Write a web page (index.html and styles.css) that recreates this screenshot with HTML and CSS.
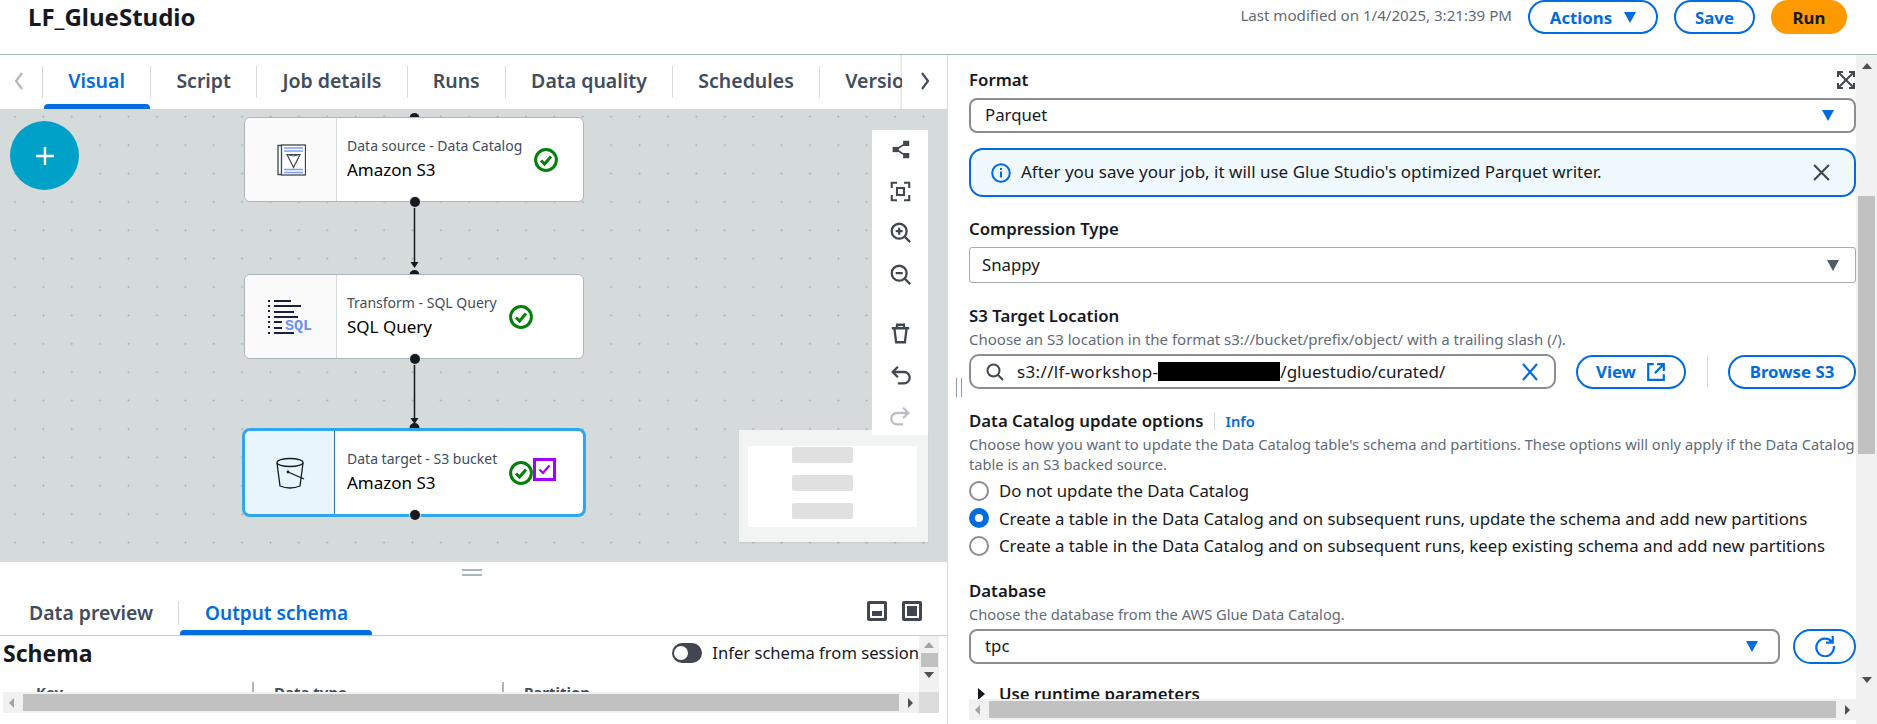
FILE: index.html
```html
<!DOCTYPE html>
<html lang="en">
<head>
    <meta charset="UTF-8">
    <meta name="viewport" content="width=device-width, initial-scale=1.0">
    <title>LF_GlueStudio</title>
    <link rel="stylesheet" href="styles.css">
</head>
<body>
    <header class="top-bar">
        <h1 class="job-title">LF_GlueStudio</h1>
        <div class="top-actions">
            <span class="modified">Last modified on 1/4/2025, 3:21:39 PM</span>
            <button class="btn btn-actions">Actions <i class="tri tri-blue tri-gap"></i></button>
            <button class="btn btn-save">Save</button>
            <button class="btn btn-run">Run</button>
        </div>
    </header>

    <main class="panes">
        <section class="left-pane">
            <nav class="tabs">
                <svg class="chev chev-left" width="12" height="20" viewBox="0 0 12 20"><path d="M9 2 3 10l6 8" fill="none" stroke="#b4b8bd" stroke-width="2.2"/></svg>
                <div class="tab-list">
                    <a class="tab active"><span>Visual</span></a>
                    <a class="tab"><span>Script</span></a>
                    <a class="tab"><span>Job details</span></a>
                    <a class="tab"><span>Runs</span></a>
                    <a class="tab"><span>Data quality</span></a>
                    <a class="tab"><span>Schedules</span></a>
                    <a class="tab"><span>Versions</span></a>
                </div>
                <svg class="chev chev-right" width="12" height="20" viewBox="0 0 12 20"><path d="m3 2 6 8-6 8" fill="none" stroke="#414d5c" stroke-width="2.2"/></svg>
            </nav>

            <div class="canvas">
                <svg class="wires" width="947" height="452" viewBox="0 0 947 452">
                    <g fill="#16191f" stroke="none">
                        <circle cx="414.5" cy="8" r="5"/>
                        <circle cx="414.5" cy="165" r="5"/>
                        <circle cx="414.5" cy="318" r="5"/>
                        <path d="M410.5 152h8l-4 6zM410.5 308h8l-4 6z"/>
                    </g>
                    <path d="M414.5 95v58M414.5 251v58" stroke="#16191f" stroke-width="1.5"/>
                </svg>

                <button class="add-node">
                    <svg width="22" height="22" viewBox="0 0 22 22"><path d="M11 2v18M2 11h18" stroke="#fff" stroke-width="2.4"/></svg>
                </button>

                <div class="node node-source">
                    <div class="node-icon">
                        <svg width="30" height="32" viewBox="0 0 30 32">
                            <path d="M5 1.500H2v29h3" fill="none" stroke="#414750" stroke-width="1.3"/>
                            <rect x="5.500" y="1" width="24" height="30" fill="#fff" stroke="#414750" stroke-width="1.3"/>
                            <path d="M8 4h19M8 7h19M8 25.500h19M8 28.500h19" stroke="#7d9cf5" stroke-width="1.5"/>
                            <path d="M11 10.500h13l-6.500 13z" fill="none" stroke="#414750" stroke-width="1.2"/>
                            <path d="M11 10.500q6.500 3 13 0" fill="none" stroke="#414750" stroke-width="1"/>
                        </svg>
                    </div>
                    <div class="node-text">
                        <div class="node-kind">Data source - Data Catalog</div>
                        <div class="node-name">Amazon S3</div>
                    </div>
                    <svg class="ok" viewBox="0 0 24 24"><circle cx="12" cy="12" r="10.4" fill="none" stroke="#037f0c" stroke-width="3"/><path d="m7 12.5 3.500 3.500L17 8.500" fill="none" stroke="#037f0c" stroke-width="3"/></svg>
                    <i class="port"></i>
                </div>

                <div class="node node-transform">
                    <div class="node-icon">
                        <svg width="46" height="36" viewBox="0 0 46 36">
                            <g fill="#16233a">
                                <rect x="0" y="1" width="2" height="2"/><rect x="0" y="6" width="2" height="2"/><rect x="0" y="11" width="2" height="2"/><rect x="0" y="17" width="2" height="2"/><rect x="0" y="22" width="2" height="2"/><rect x="0" y="27" width="2" height="2"/><rect x="0" y="33" width="2" height="2"/>
                                <rect x="6" y="1" width="17" height="2"/><rect x="6" y="6" width="27" height="2"/><rect x="6" y="12" width="20" height="2"/><rect x="6" y="17" width="24" height="2"/><rect x="6" y="22" width="8" height="2"/><rect x="6" y="28" width="8" height="2"/><rect x="6" y="33" width="20" height="2"/>
                            </g>
                            <text class="sql-mark" x="17" y="31">SQL</text>
                        </svg>
                    </div>
                    <div class="node-text">
                        <div class="node-kind">Transform - SQL Query</div>
                        <div class="node-name">SQL Query</div>
                    </div>
                    <svg class="ok" viewBox="0 0 24 24"><circle cx="12" cy="12" r="10.4" fill="none" stroke="#037f0c" stroke-width="3"/><path d="m7 12.5 3.500 3.500L17 8.500" fill="none" stroke="#037f0c" stroke-width="3"/></svg>
                    <i class="port"></i>
                </div>

                <div class="node node-target">
                    <div class="node-icon">
                        <svg width="30" height="32" viewBox="0 0 30 32">
                            <ellipse cx="15" cy="5.5" rx="13" ry="4" fill="none" stroke="#16191f" stroke-width="1.3"/>
                            <path d="M2 6l3 23q10 4 20 0l3-23" fill="none" stroke="#16191f" stroke-width="1.3"/>
                            <path d="M13 15l16 7" stroke="#16191f" stroke-width="1.3"/>
                            <circle cx="13" cy="15" r="1.4" fill="#16191f"/>
                        </svg>
                    </div>
                    <div class="node-text">
                        <div class="node-kind">Data target - S3 bucket</div>
                        <div class="node-name">Amazon S3</div>
                    </div>
                    <svg class="ok" viewBox="0 0 24 24"><circle cx="12" cy="12" r="10.4" fill="none" stroke="#037f0c" stroke-width="3"/><path d="m7 12.5 3.500 3.500L17 8.500" fill="none" stroke="#037f0c" stroke-width="3"/></svg>
                    <span class="lineage">
                        <svg width="13" height="11" viewBox="0 0 13 11"><path d="m1.5 5.5 3.5 3.5 6.5-7.5" fill="none" stroke="#a100ff" stroke-width="2.2"/></svg>
                    </span>
                    <i class="port"></i>
                </div>

                <div class="minimap">
                    <div class="minimap-view">
                        <i></i><i></i><i></i>
                    </div>
                </div>

                <div class="tools">
                    <svg viewBox="0 0 24 24"><path d="M18 5 7 12l11 7" fill="none" stroke="#414750" stroke-width="2"/><rect x="15" y="2" width="7" height="6" fill="#414750"/><rect x="15" y="16" width="7" height="6" fill="#414750"/><rect x="3" y="9" width="7" height="6" fill="#414750"/></svg>
                    <svg viewBox="0 0 24 24"><path d="M2 8V2h6M16 2h6v6M22 16v6h-6M8 22H2v-6" fill="none" stroke="#414750" stroke-width="2.4"/><rect x="8" y="8" width="8" height="8" fill="none" stroke="#414750" stroke-width="2.4"/></svg>
                    <svg viewBox="0 0 24 24"><circle cx="10.500" cy="10.500" r="8.500" fill="none" stroke="#414750" stroke-width="2.6"/><path d="m17 17 6 6M10.500 6.500v8M6.500 10.500h8" stroke="#414750" stroke-width="2.600"/></svg>
                    <svg viewBox="0 0 24 24"><circle cx="10.500" cy="10.500" r="8.500" fill="none" stroke="#414750" stroke-width="2.6"/><path d="m17 17 6 6M6.500 10.500h8" stroke="#414750" stroke-width="2.600"/></svg>
                    <svg class="tool-gap" viewBox="0 0 24 24"><path d="M2 6h20M8 6V2h8v4M5 6l2 16h10l2-16" fill="none" stroke="#414750" stroke-width="2.600"/></svg>
                    <svg viewBox="0 0 24 24"><path d="M9 2 3 8l6 6M3 8h13a6 6 0 0 1 0 13H9" fill="none" stroke="#414750" stroke-width="2.600"/></svg>
                    <svg viewBox="0 0 24 24"><path d="m15 2 6 6-6 6M21 8H8a6 6 0 0 0 0 13h7" fill="none" stroke="#bcbfc4" stroke-width="2.600"/></svg>
                </div>
            </div>

            <div class="bottom">
                <div class="drag-handle"></div>
                <div class="bottom-tabs">
                    <a class="sub-tab">Data preview</a>
                    <a class="sub-tab active">Output schema</a>
                    <div class="layout-btns">
                        <span class="layout-btn layout-half"></span>
                        <span class="layout-btn layout-full"></span>
                    </div>
                </div>
                <div class="schema-grid">
                    <div class="schema-body">
                        <div class="schema-head">
                            <h2>Schema</h2>
                            <label class="infer"><span class="toggle"></span>Infer schema from session</label>
                        </div>
                        <div class="schema-cols">
                            <div>Key</div>
                            <div>Data type</div>
                            <div>Partition</div>
                        </div>
                    </div>
                    <div class="vbar vbar-small">
                        <i class="arrow-up arrow-pale"></i>
                        <b></b>
                        <i class="arrow-down"></i>
                    </div>
                    <div class="hbar">
                        <i class="arrow-left arrow-pale"></i>
                        <b></b>
                        <i class="arrow-right"></i>
                    </div>
                    <div class="corner"></div>
                </div>
            </div>
        </section>

        <section class="right-pane">
            <span class="pane-grip"></span>
            <div class="form">
                <div class="format-row">
                    <span class="field-label">Format</span>
                    <svg width="18" height="18" viewBox="0 0 18 18"><path d="M1 6V1h5M12 1h5v5M17 12v5h-5M6 17H1v-5" fill="none" stroke="#414750" stroke-width="2"/><path d="m2 2 14 14M16 2 2 16" stroke="#414750" stroke-width="2"/></svg>
                </div>
                <div class="select"><span>Parquet</span><i class="tri tri-blue"></i></div>
                <div class="alert">
                    <svg width="20" height="20" viewBox="0 0 20 20"><circle cx="10" cy="10" r="8.800" fill="none" stroke="#006ce0" stroke-width="2"/><path d="M10 8.500v6M10 5v2" stroke="#006ce0" stroke-width="2"/></svg>
                    <span class="alert-text">After you save your job, it will use Glue Studio's optimized Parquet writer.</span>
                    <svg class="alert-close" width="19" height="19" viewBox="0 0 18 18"><path d="m2 2 14 14M16 2 2 16" stroke="#414750" stroke-width="2"/></svg>
                </div>

                <div class="field-label label-compression">Compression Type</div>
                <div class="select select-plain"><span>Snappy</span><i class="tri tri-gray"></i></div>

                <div class="field-label label-s3">S3 Target Location</div>
                <div class="help help-s3">Choose an S3 location in the format s3://bucket/prefix/object/ with a trailing slash (/).</div>
                <div class="s3-row">
                    <div class="s3-input">
                        <svg width="18" height="18" viewBox="0 0 18 18"><circle cx="7.500" cy="7.500" r="6" fill="none" stroke="#414750" stroke-width="2"/><path d="m12 12 5 5" stroke="#414750" stroke-width="2"/></svg>
                        <span class="s3-value"><span class="s3-prefix">s3://lf-workshop-</span><span class="redacted"></span>/gluestudio/curated/</span>
                        <svg class="s3-clear" width="18" height="18" viewBox="0 0 18 18"><path d="m2 1 14 16M16 1 2 17" stroke="#006ce0" stroke-width="2.200"/></svg>
                    </div>
                    <button class="btn btn-view">View
                        <svg width="20" height="20" viewBox="0 0 18 18"><path d="M7 2H2v14h14v-5M10 2h6v6M16 2 8 10" fill="none" stroke="#006ce0" stroke-width="2"/></svg>
                    </button>
                    <span class="btn-sep"></span>
                    <button class="btn btn-browse">Browse S3</button>
                </div>

                <div class="catalog-head">
                    <span class="field-label">Data Catalog update options</span>
                    <a class="info-link">Info</a>
                </div>
                <div class="help">Choose how you want to update the Data Catalog table's schema and partitions. These options will only apply if the Data Catalog table is an S3 backed source.</div>
                <div class="radios">
                    <label class="radio"><i class="dot"></i>Do not update the Data Catalog</label>
                    <label class="radio"><i class="dot dot-on"></i>Create a table in the Data Catalog and on subsequent runs, update the schema and add new partitions</label>
                    <label class="radio"><i class="dot"></i>Create a table in the Data Catalog and on subsequent runs, keep existing schema and add new partitions</label>
                </div>

                <div class="field-label label-database">Database</div>
                <div class="help">Choose the database from the AWS Glue Data Catalog.</div>
                <div class="db-row">
                    <div class="select select-db"><span>tpc</span><i class="tri tri-blue"></i></div>
                    <button class="btn btn-refresh">
                        <svg width="22" height="22" viewBox="0 0 20 20"><path d="M16.500 6.500A8 8 0 1 0 18 10M17 1v6h-6" fill="none" stroke="#006ce0" stroke-width="2"/></svg>
                    </button>
                </div>
                <div class="expand-row"><i class="arrow-right arrow-dark"></i><span class="field-label">Use runtime parameters</span></div>
            </div>
            <div class="vbar vbar-main">
                <i class="arrow-up"></i>
                <b></b>
                <i class="arrow-down"></i>
            </div>
            <div class="hbar hbar-main">
                <i class="arrow-left arrow-pale"></i>
                <b></b>
                <i class="arrow-right"></i>
            </div>
        </section>
    </main>
</body>
</html>
```

FILE: styles.css
```css
* {
    box-sizing: border-box;
}
html, body {
    height: 100%;
}
body {
    margin: 0;
    overflow: hidden;
    font-family: "Noto Sans", Arial, sans-serif;
    color: #16191f;
    background: #fff;
}
button {
    font-family: inherit;
}

/* header */
.top-bar {
    height: 55px;
    display: flex;
    justify-content: space-between;
    border-bottom: 1px solid #aab7b8;
    padding: 0 30px 0 28px;
}
.job-title {
    margin: 2px 0 0;
    font-size: 24px;
    line-height: 30px;
    font-weight: 700;
}
.top-actions {
    display: flex;
    align-items: flex-start;
    gap: 16px;
}
.modified {
    font-size: 15.1px;
    line-height: 30px;
    color: #5f6b7a;
}
.btn {
    height: 34px;
    padding: 0;
    display: inline-flex;
    align-items: center;
    justify-content: center;
    border: 2px solid #006ce0;
    border-radius: 18px;
    background: #fff;
    color: #006ce0;
    font-size: 16.8px;
    font-weight: 700;
}
.btn-actions {
    width: 130px;
}
.btn-save {
    width: 81px;
}
.btn-run {
    width: 76px;
    background: #ff9900;
    border-color: #ff9900;
    color: #16191f;
}
.tri {
    display: inline-block;
    width: 0;
    height: 0;
    border-left: 6px solid transparent;
    border-right: 6px solid transparent;
    border-top: 11px solid #006ce0;
}
.tri-gap {
    margin-left: 12px;
}
.tri-gray {
    border-top-color: #545b64;
}

.panes {
    height: 669px;
    display: flex;
}

/* left side */
.left-pane {
    width: 948px;
    display: flex;
    flex-direction: column;
    border-right: 1px solid #d5dbdb;
}
.tabs {
    height: 55px;
    display: flex;
    position: relative;
    border-bottom: 1px solid #d5dbdb;
}
.chev {
    position: absolute;
    top: 16px;
}
.chev-left {
    left: 13px;
}
.chev-right {
    left: 919px;
}
.tab-list {
    margin-left: 42px;
    width: 860px;
    display: flex;
    overflow: hidden;
    box-shadow: inset -3px 0 3px -2px #d5dbdb;
}
.tab {
    position: relative;
    padding-top: 11px;
    flex: none;
    font-size: 19.5px;
    font-weight: 600;
    color: #414d5c;
}
.tab span {
    display: block;
    height: 32px;
    line-height: 30px;
    padding: 0 25.2px;
    border-left: 1px solid #d5dbdb;
}
.tab.active {
    color: #006ce0;
}
.tab.active::after {
    content: "";
    position: absolute;
    left: 2px;
    right: 0;
    bottom: 0;
    height: 5px;
    border-radius: 4px 4px 0 0;
    background: #006ce0;
}

.canvas {
    position: relative;
    height: 452px;
    overflow: hidden;
    background-color: #d5dbdb;
    background-image: radial-gradient(circle, #a4aeae 0.8px, transparent 1.2px);
    background-size: 28.4px 28.4px;
    background-position: 0.8px -7.5px;
}
.wires {
    position: absolute;
    left: 0;
    top: 0;
}
.add-node {
    position: absolute;
    left: 10px;
    top: 11px;
    width: 69px;
    height: 69px;
    display: flex;
    align-items: center;
    justify-content: center;
    border: 0;
    border-radius: 50%;
    background: #00a1c9;
}
.node {
    position: absolute;
    left: 244px;
    width: 340px;
    height: 85px;
    display: flex;
    align-items: center;
    background: #fff;
    border: 1px solid #aab7b8;
    border-radius: 6px;
}
.node-source {
    top: 7px;
}
.node-transform {
    top: 164px;
}
.node-target {
    top: 318px;
    left: 242px;
    width: 344px;
    height: 89px;
    border: 3px solid #2ea6f2;
    border-radius: 8px;
}
.node-icon {
    flex: none;
    align-self: stretch;
    width: 92px;
    display: flex;
    align-items: center;
    justify-content: center;
    background: #fafafa;
    border-right: 1px solid #d5dbdb;
    border-radius: 6px 0 0 6px;
}
.node-target .node-icon {
    width: 90px;
    background: #e8f5fd;
    border-right-color: #2f7fb5;
}
.node-text {
    padding-left: 10px;
    margin: -3px 12px 0 0;
}
.node-target .node-text {
    padding-left: 12px;
}
.node-kind {
    font-size: 14px;
    line-height: 20px;
    color: #414d5c;
}
.node-name {
    margin-top: 3px;
    font-size: 17px;
    line-height: 22px;
    color: #000;
}
.sql-mark {
    font-family: "Liberation Mono", monospace;
    font-size: 15px;
    font-weight: 700;
    fill: #6b8ff7;
}
.ok {
    flex: none;
    width: 24px;
    height: 24px;
}
.lineage {
    flex: none;
    width: 23px;
    height: 23px;
    margin-top: -6px;
    display: flex;
    align-items: center;
    justify-content: center;
    border: 3px solid #a100ff;
}
.port {
    position: absolute;
    left: 165px;
    bottom: -6px;
    width: 10px;
    height: 10px;
    border-radius: 50%;
    background: #16191f;
    box-shadow: 0 0 0 1px #d5dbdb;
}
.tools {
    position: absolute;
    left: 872px;
    top: 20px;
    width: 56px;
    height: 305px;
    display: flex;
    flex-direction: column;
    align-items: center;
    gap: 20.5px;
    padding-top: 9px;
    background: #fff;
}
.tools svg {
    flex: none;
    width: 21px;
    height: 21px;
}
.tools .tool-gap {
    margin-top: 18px;
}
.minimap {
    position: absolute;
    left: 739px;
    top: 320px;
    width: 189px;
    height: 112px;
    padding: 16px 11px 15px 9px;
    background: #f2f3f3;
    box-shadow: 0 1px 2px rgba(0, 0, 0, 0.08);
}
.minimap-view {
    height: 81px;
    padding-top: 1px;
    display: flex;
    flex-direction: column;
    gap: 12px;
    background: #fff;
}
.minimap-view i {
    display: block;
    width: 61px;
    height: 16px;
    margin-left: 44px;
    background: #e1e1e1;
    border-radius: 2px;
}

/* bottom panel */
.bottom {
    flex: 1;
    display: flex;
    flex-direction: column;
}
.drag-handle {
    width: 20px;
    height: 7px;
    margin: 7px 0 0 462px;
    border-top: 2px solid #aab7b8;
    border-bottom: 2px solid #aab7b8;
}
.bottom-tabs {
    height: 53px;
    margin-top: 7px;
    display: flex;
    padding-top: 18px;
    position: relative;
    border-bottom: 1px solid #c6cbcf;
    font-size: 19.4px;
    font-weight: 600;
    color: #414d5c;
}
.sub-tab {
    height: 24px;
    line-height: 24px;
    padding: 0 25px 0 29px;
}
.sub-tab.active {
    padding-left: 26px;
    padding-right: 0;
    border-left: 1px solid #d5dbdb;
    font-size: 19px;
    color: #006ce0;
}
.sub-tab.active::after {
    content: "";
    position: absolute;
    left: 180px;
    bottom: 0;
    width: 192px;
    height: 5px;
    border-radius: 4px 4px 0 0;
    background: #006ce0;
}
.layout-btns {
    margin-left: auto;
    padding-right: 25px;
    display: flex;
    gap: 15px;
}
.layout-btn {
    display: block;
    width: 20px;
    height: 20px;
    border: 3px solid #414750;
    border-radius: 2px;
}
.layout-half {
    background: linear-gradient(#fff 50%, #414750 50%);
    box-shadow: inset 0 0 0 2px #fff;
}
.layout-full {
    background: #414750;
    box-shadow: inset 0 0 0 2px #fff;
}
.schema-grid {
    margin: 0 9px 0 3px;
    display: grid;
    grid-template-columns: 916px 20px;
    grid-template-rows: 56px 21px;
}
.schema-body {
    overflow: hidden;
}
.schema-head {
    height: 33px;
    display: flex;
    justify-content: space-between;
    align-items: center;
}
.schema-head h2 {
    margin: 0;
    font-size: 23px;
    font-weight: 700;
}
.infer {
    display: flex;
    align-items: center;
    gap: 10px;
    font-size: 16.6px;
    color: #16191f;
}
.toggle {
    position: relative;
    width: 30px;
    height: 20px;
    border-radius: 10px;
    background: #414750;
}
.toggle::after {
    content: "";
    position: absolute;
    left: 2px;
    top: 3px;
    width: 14px;
    height: 14px;
    border-radius: 50%;
    background: #fff;
}
.schema-cols {
    margin-top: 13px;
    display: grid;
    grid-template-columns: 249px 250px 1fr;
    font-size: 15px;
    font-weight: 700;
    line-height: 20px;
    color: #414d5c;
}
.schema-cols div {
    padding-left: 20px;
    border-left: 2px solid #aab7b8;
}
.schema-cols div:first-child {
    padding-left: 33px;
    border-left: 0;
}

/* fake scrollbars */
.vbar, .hbar {
    display: flex;
    align-items: center;
    background: #f1f1f1;
}
.vbar {
    flex-direction: column;
}
.vbar b, .hbar b {
    display: block;
    background: #c1c1c1;
}
.vbar-small {
    padding-top: 6px;
}
.vbar-small b {
    width: 17px;
    height: 14px;
    margin: 5px 0;
}
.hbar {
    padding: 0 6px;
    justify-content: space-between;
}
.hbar b {
    height: 17px;
    flex: 1;
    margin: 0 9px;
}
.corner {
    background: #dcdcdc;
}
.arrow-up, .arrow-down, .arrow-left, .arrow-right {
    display: block;
    flex: none;
    width: 0;
    height: 0;
}
.arrow-up {
    border-left: 5px solid transparent;
    border-right: 5px solid transparent;
    border-bottom: 6px solid #505050;
}
.arrow-down {
    border-left: 5px solid transparent;
    border-right: 5px solid transparent;
    border-top: 6px solid #505050;
}
.arrow-left {
    border-top: 5px solid transparent;
    border-bottom: 5px solid transparent;
    border-right: 5px solid #505050;
}
.arrow-right {
    border-top: 5px solid transparent;
    border-bottom: 5px solid transparent;
    border-left: 5px solid #505050;
}
.arrow-up.arrow-pale {
    border-bottom-color: #a3a3a3;
}
.arrow-left.arrow-pale {
    border-right-color: #a3a3a3;
}

/* right side */
.right-pane {
    flex: 1;
    position: relative;
    display: grid;
    grid-template-columns: 908px 21px;
    grid-template-rows: 644px 21px 4px;
}
.pane-grip {
    position: absolute;
    left: 8px;
    top: 323px;
    width: 6px;
    height: 19px;
    border-left: 1.5px solid #8d99a8;
    border-right: 1.5px solid #8d99a8;
}
.form {
    overflow: hidden;
    padding: 14px 0 0 21px;
}
.vbar-main {
    grid-column: 2;
    grid-row: 1 / 4;
    padding-top: 8px;
}
.vbar-main b {
    width: 17px;
    height: 258px;
    margin-top: 127px;
    margin-bottom: 223px;
}
.hbar-main {
    grid-column: 1;
    grid-row: 2;
    margin-left: 21px;
}
.field-label {
    display: block;
    font-size: 16.8px;
    font-weight: 600;
    line-height: 22px;
    color: #16191f;
}
.format-row {
    display: flex;
    justify-content: space-between;
    align-items: center;
}
.format-row svg {
    margin-right: 1px;
}
.select {
    height: 35px;
    margin-top: 7px;
    padding: 0 20px 0 14px;
    display: flex;
    align-items: center;
    justify-content: space-between;
    border: 2px solid #8c8c94;
    border-radius: 8px;
    font-size: 16.8px;
}
.select span {
    margin-top: -2px;
}
.alert {
    height: 49px;
    margin-top: 15px;
    padding: 0 23px 0 20px;
    display: flex;
    align-items: center;
    gap: 10px;
    background: #f0f9fe;
    border: 2px solid #006ce0;
    border-radius: 14px;
}
.alert-text {
    margin-top: -2px;
    font-size: 17px;
}
.alert-close {
    margin-left: auto;
}
.label-compression {
    margin-top: 21px;
}
.select-plain {
    height: 36px;
    padding: 0 16px 0 12px;
    border: 1px solid #a6abb0;
    border-radius: 3px;
}
.label-s3 {
    margin-top: 22px;
}
.help {
    margin-top: 2px;
    font-size: 14.7px;
    line-height: 20px;
    color: #5f6b7a;
}
.help-s3 {
    font-size: 15px;
}
.s3-row {
    margin-top: 5px;
    display: flex;
    align-items: center;
}
.s3-input {
    width: 587px;
    height: 35px;
    padding: 0 15px;
    display: flex;
    align-items: center;
    gap: 13px;
    border: 2px solid #8c8c94;
    border-radius: 10px;
    font-size: 17px;
}
.s3-value {
    display: flex;
    align-items: center;
}
.s3-prefix {
    letter-spacing: 0.35px;
}
.redacted {
    display: inline-block;
    width: 122px;
    height: 19px;
    background: #000;
}
.s3-clear {
    margin-left: auto;
}
.btn-view {
    width: 110px;
    margin-left: 20px;
    gap: 10px;
}
.btn-sep {
    width: 1px;
    height: 31px;
    margin: 0 20px 0 21px;
    background: #d5dbdb;
}
.btn-browse {
    width: 128px;
}
.catalog-head {
    margin-top: 21px;
    display: flex;
    align-items: center;
}
.info-link {
    margin-left: 10px;
    padding-left: 11px;
    border-left: 1px solid #d5dbdb;
    font-size: 14.6px;
    line-height: 18px;
    font-weight: 600;
    color: #006ce0;
}
.radios {
    margin-top: 3px;
}
.radio {
    height: 27.5px;
    display: flex;
    align-items: center;
    gap: 10px;
    font-size: 16.8px;
}
.dot {
    flex: none;
    width: 20px;
    height: 20px;
    border: 2px solid #8c8c94;
    border-radius: 50%;
}
.dot-on {
    border: 6px solid #006ce0;
}
.label-database {
    margin-top: 20px;
}
.db-row {
    margin-top: 5px;
    display: flex;
    gap: 13px;
}
.select-db {
    flex: 1;
    margin-top: 0;
    padding-left: 14px;
}
.btn-refresh {
    flex: none;
    width: 63px;
    height: 35px;
}
.expand-row {
    margin-top: 19px;
    padding-left: 9px;
    display: flex;
    align-items: center;
    gap: 14px;
}
.arrow-dark {
    border-top-width: 6px;
    border-bottom-width: 6px;
    border-left: 7px solid #16191f;
}
```
